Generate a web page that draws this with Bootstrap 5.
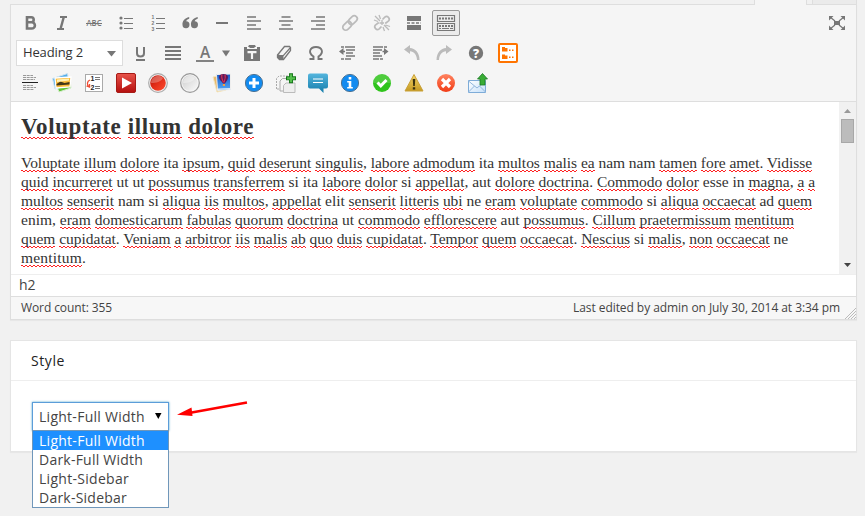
<!DOCTYPE html>
<html lang="en">
<head>
<meta charset="utf-8">
<title>Edit page</title>
<link href="https://cdn.jsdelivr.net/npm/bootstrap@5.3.0/dist/css/bootstrap.min.css" rel="stylesheet">
<style>
body{background:#f1f1f1;font-family:"Open Sans",sans-serif;color:#444;width:865px;height:516px;overflow:hidden;font-size:13px}
.tabstrip{height:4px;padding-right:8px}
.tab-on{width:53px;height:5px;background:#f5f5f5;border:solid #dedede;border-width:0 1px;margin-right:5px;position:relative;z-index:1}
.tab-off{width:45px;background:#ebebeb;border:solid #dedede;border-width:0 1px}
.editor{margin-left:10px;width:847px;height:316px;border:1px solid #dedede;background:#f5f5f5;box-shadow:0 1px 1px rgba(0,0,0,.04)}
.tools{height:97px;padding:3px 3px 0;border-bottom:1px solid #dedede}
.tool-row{height:30px}
.tool{width:32px;height:30px;display:flex;align-items:center;justify-content:center;flex:none}
.tool svg,.tool-caret svg{width:20px;height:20px;display:block;overflow:visible}
.tool-caret{width:15px;height:30px;display:flex;align-items:center;justify-content:center}
.tool-active{width:28px;height:26px;margin:0 2px;border:1px solid #999;border-radius:2px;background:#ebebeb}
.format-pick{width:107px;height:26px;margin:0 2px;border:1px solid #ddd;background:#fff;color:#333;padding:0 6px;font-size:13px}
.g{fill:#777}.s{stroke:#777;fill:none}.dim{stroke:#bbb;fill:none}
svg text{font-family:"Open Sans",sans-serif}
svg .tiny text{font-family:"Liberation Sans",sans-serif}
.writing{height:172px;background:#fff;color:#333}
.copy{padding:13px 0 0 10px;font-family:"Liberation Serif",serif;font-size:15.5px;white-space:nowrap}
.copy h2{font-family:inherit;font-size:23px;font-weight:700;line-height:24px;height:24px;margin:0 0 14px;color:#333}
.copy p{margin:0;line-height:19px}
.copy .ln{display:block;height:19px;width:max-content}
.copy i{font-style:normal;background-image:linear-gradient(90deg,#f22 50%,#fff0 50%),linear-gradient(90deg,#fff0 50%,#f22 50%);background-size:4px 1px,4px 1px;background-repeat:repeat-x;background-position:0 calc(100% - 1px),0 100%}
.copy p i{padding-bottom:1px}
.bar{width:17px;background:#f1f1f1}
.bar-thumb{width:13px;height:24px;background:#bcbcbc;border:1px solid #a8a8a8}
.path-line{height:22px;border-top:1px solid #eee;background:#fff;font-size:14px;line-height:20px;padding-left:8px}
.status{height:23px;border-top:1px solid #dedede;background:#f7f7f7;font-size:12px;line-height:21px;padding:0 16px 0 10px;position:relative}
.grip{position:absolute;right:0;bottom:0}
.stylebox{margin:20px 0 0 10px;width:847px;height:112px;border:1px solid #e5e5e5;background:#fff;box-shadow:0 1px 1px rgba(0,0,0,.04)}
.stylebox h3{height:40px;margin:0;padding-left:20px;font-size:14px;font-weight:400;line-height:39px;color:#222;border-bottom:1px solid #eee}
.picker{margin:21px 0 0 21px;width:137px}
.picker-face{height:29px;border:1px solid #5b9dd9;box-shadow:0 0 2px rgba(30,140,190,.8);padding:0 6px;font-size:14px;line-height:28px;background:#fff}
.picker-list{position:absolute;left:0;top:28px;width:137px;height:78px;border:1px solid #7097ba;background:#fff;font-size:14px;line-height:19px}
.picker-list div{height:19px;padding-left:6px;white-space:nowrap}
.picker-list .chosen{background:#1e90ff;color:#fff}
.fit{display:inline-block;white-space:nowrap}
</style>
<script src="https://cdn.jsdelivr.net/npm/bootstrap@5.3.0/dist/js/bootstrap.bundle.min.js"></script>
</head>
<body>
<svg width="0" height="0" class="position-absolute">
<defs>
<linearGradient id="red" x2="0" y2="1"><stop stop-color="#e8534a"/><stop offset="1" stop-color="#b50f0f"/></linearGradient>
<linearGradient id="ball" x2="1" y2="1"><stop stop-color="#b50d02"/><stop offset=".45" stop-color="#e02c18"/><stop offset="1" stop-color="#ff4d30"/></linearGradient>
<linearGradient id="silver" x2="1" y2="1"><stop stop-color="#ccc"/><stop offset="1" stop-color="#fafafa"/></linearGradient>
<linearGradient id="teal" x2="0" y2="1"><stop stop-color="#54b5dd"/><stop offset="1" stop-color="#147caa"/></linearGradient>
<linearGradient id="gold" x2="0" y2="1"><stop stop-color="#f5d568"/><stop offset="1" stop-color="#c59a22"/></linearGradient>
<linearGradient id="sky" x2="0" y2="1"><stop stop-color="#1559c8"/><stop offset="1" stop-color="#55a8f5"/></linearGradient>
<linearGradient id="orange" x2="0" y2="1"><stop stop-color="#ff8360"/><stop offset="1" stop-color="#f13c16"/></linearGradient>
<linearGradient id="mailfill" x2="1" y2="1"><stop stop-color="#fff"/><stop offset="1" stop-color="#c5e0fa"/></linearGradient>
</defs></svg>

<div class="tabstrip d-flex justify-content-end"><div class="tab-on"></div><div class="tab-off"></div></div>
<main class="editor">
<div class="tools">
<div class="tool-row d-flex align-items-center">
<span class="tool"><svg viewBox="0 0 20 20"><path class="s" stroke-width="2.6" d="M7 4.3h4.2a2.5 2.5 0 0 1 0 5H7zm0 5h4.8a3 3 0 0 1 0 6.2H7z"/></svg></span>
<span class="tool"><svg viewBox="0 0 20 20"><path class="s" stroke-width="2" d="M8 4h7M5 16h7"/><path class="s" stroke-width="2.4" d="M11.8 4 8.500 16"/></svg></span>
<span class="tool"><svg viewBox="0 0 20 20"><text x="2.500" y="13" font-size="8.500" font-weight="600" textLength="15" lengthAdjust="spacingAndGlyphs" class="g">ABC</text><path class="s" d="M2 10.500h16"/></svg></span>
<span class="tool"><svg viewBox="0 0 20 20"><g class="g"><circle cx="5" cy="5" r="1.600"/><circle cx="5" cy="10" r="1.600"/><circle cx="5" cy="15" r="1.600"/></g><path class="s" d="M8 5.500h9M8 10.500h9M8 15.500h9"/></svg></span>
<span class="tool"><svg viewBox="0 0 20 20"><g class="g tiny" font-size="5" font-weight="700"><text x="3.500" y="6">1</text><text x="3.500" y="12">2</text><text x="3.500" y="18">3</text></g><path class="s" d="M8 5.500h9M8 10.500h9M8 15.500h9"/></svg></span>
<span class="tool"><svg viewBox="0 0 20 20"><path class="g" d="M9.200 4C4.500 5 2.200 8.200 2.500 12a3.500 3.500 0 1 0 3.700-3.700c.2-1.200 1.300-2.100 3-2.500zM17.700 4c-4.700 1-7 4.200-6.700 8a3.500 3.500 0 1 0 3.700-3.700c.2-1.200 1.300-2.100 3-2.500z"/></svg></span>
<span class="tool"><svg viewBox="0 0 20 20"><path class="s" stroke-width="2" d="M4 10h12"/></svg></span>
<span class="tool"><svg viewBox="0 0 20 20"><path class="s" stroke-width="1.700" d="M3 4h9M3 8h14M3 12h9M3 16h14"/></svg></span>
<span class="tool"><svg viewBox="0 0 20 20"><path class="s" stroke-width="1.700" d="M5.500 4h9M3 8h14M5.500 12h9M3 16h14"/></svg></span>
<span class="tool"><svg viewBox="0 0 20 20"><path class="s" stroke-width="1.700" d="M8 4h9M3 8h14M8 12h9M3 16h14"/></svg></span>
<span class="tool"><svg viewBox="0 0 20 20"><g class="dim" stroke-width="1.700" transform="rotate(-45 10 10)"><rect x="1" y="7" width="10" height="6" rx="3"/><rect x="9" y="7" width="10" height="6" rx="3"/></g></svg></span>
<span class="tool"><svg viewBox="0 0 20 20"><g class="dim" stroke-width="1.700"><path d="m10.500 6.500 2.300-2.300a2.700 2.700 0 0 1 3.800 3.800l-3.400 2.500M9.500 13.500l-2.300 2.300a2.700 2.700 0 0 1-3.800-3.800l3.400-2.500"/><path stroke-width="1.300" d="m3 3 5 5M7 2l1.500 4M2 7l4 1.500m6 3.500 5 5m-6-3 1.500 4m1-6 4.500 1.500M10 7v5M7.500 10H12"/></g></svg></span>
<span class="tool"><svg viewBox="0 0 20 20"><path class="g" d="M3 3h14v5H3zM3 12h14v5H3z"/><path class="s" stroke-width="1.300" stroke-dasharray="3 1.500" d="M3 10h14"/></svg></span>
<span class="tool tool-active"><svg viewBox="0 0 20 20"><path class="s" stroke-width="1.200" d="M1.500 2.500h17v6h-17zM1.500 10.500h17v7h-17z"/><path class="s" stroke-width="2" stroke-dasharray="2 1" d="M3 5.500h14M3 13h14"/><path class="s" d="M3 15.500h2m1 0h7m1 0h3"/></svg></span>
<span class="tool ms-auto"><svg viewBox="0 0 20 20"><path class="g" d="M7 8h6v4H7zM2 3h4.500L2 7.500zm16 0v4.500L13.500 3zM2 17v-4.500L6.500 17zm16 0h-4.500l4.500-4.500z"/><path class="s" stroke-width="1.300" d="m3 4 5 4m9-4-5 4m-9 8 5-4m9 4-5-4"/></svg></span>
</div>
<div class="tool-row d-flex align-items-center">
<div class="format-pick d-flex align-items-center justify-content-between"><span class="fit" data-w="60">Heading 2</span><svg width="9" height="7"><path class="g" d="M0 1h9L4.500 6.500z"/></svg></div>
<span class="tool"><svg viewBox="0 0 20 20"><path class="s" stroke-width="2" d="M6 4v6.300c0 2.300 1.400 3.300 3.500 3.300s3.500-1 3.500-3.300V4M5 17h9"/></svg></span>
<span class="tool"><svg viewBox="0 0 20 20"><path class="s" stroke-width="1.900" d="M2 4h16M2 8h16M2 12h16M2 16h16"/></svg></span>
<span class="tool"><svg viewBox="0 0 20 20"><text x="10" y="14.500" text-anchor="middle" font-size="15.500" font-weight="600" class="g">A</text><path class="s" stroke-width="1.800" d="M1 18h18"/></svg></span>
<span class="tool-caret"><svg viewBox="0 0 20 20"><path class="g" d="M3 7.500h8l-4 6z"/></svg></span>
<span class="tool"><svg viewBox="0 0 20 20"><path fill-rule="evenodd" class="g" d="M2 4h4l1-2h6l1 2h4v14H2zM5 4h10v2H5zm.500 4v2.200h3.400V16h2.200v-5.800h3.400V8z"/><path class="g" d="M7.500 3h5v2h-5z"/></svg></span>
<span class="tool"><svg viewBox="0 0 20 20"><path fill="#fff" class="s" stroke-width="1.300" d="m3.500 12 7-8.500h5l1 1v3l-7 9h-4l-2-2z"/><path class="s" stroke-width="1.200" d="m3.500 12 2 .3 4 .2 7-8"/><path class="g" d="m3.500 12 6 .5v4h-4l-2-2z"/></svg></span>
<span class="tool"><svg viewBox="0 0 20 20"><path class="s" stroke-width="1.900" d="M3.500 16h4v-2.500C1.500 9.500 4 4 10 4s8.500 5.500 2.500 9.500V16h4"/></svg></span>
<span class="tool"><svg viewBox="0 0 20 20"><path class="s" stroke-width="1.700" d="M3 4h3m1 0h10M8 7h9M8 10h7M8 13h9M3 16h3m1 0h6M4 8.500h3"/><path class="g" d="m1 8.500 4.500-3.500v7z"/></svg></span>
<span class="tool"><svg viewBox="0 0 20 20"><path class="s" stroke-width="1.700" d="M3 4h10m1 0h3M3 7h9M3 10h7M3 13h9M3 16h6m1 0h3M12.500 8.500H16"/><path class="g" d="m18.500 8.500-4.500-3.500v7z"/></svg></span>
<span class="tool"><svg viewBox="0 0 20 20"><path fill="#bbb" d="M2 6.500 8 2v3c5 .2 9.500 4.500 9.500 12H15c-.2-5.500-3-8.500-7-8.800V11z"/></svg></span>
<span class="tool"><svg viewBox="0 0 20 20"><path fill="#bbb" d="M18 6.500 12 2v3c-5 .2-9.500 4.500-9.500 12H5c.2-5.500 3-8.500 7-8.800V11z"/></svg></span>
<span class="tool"><svg viewBox="0 0 20 20"><circle class="g" cx="10" cy="10" r="7.200"/><text x="10" y="14.500" text-anchor="middle" font-size="12" font-weight="800" fill="#fff">?</text></svg></span>
<span class="tool"><svg viewBox="0 0 20 20"><rect x="1" y="1" width="18" height="18" rx="1" fill="#fff" stroke="#ff7400" stroke-width="2"/><path fill="#ff7400" d="M4 4h3v1h2.500v3.500H4zM4 11.500h3v1h2.500V16H4zM11 6.500h1.500V8H11zm3 0h1.500V8H14zm-3 7h1.500V15H11zm3 0h1.500V15H14z"/></svg></span>
</div>
<div class="tool-row d-flex align-items-center">
<span class="tool"><svg viewBox="0 0 20 20"><path stroke="#999" stroke-dasharray="3 .7" d="M3 2.500h10M3 4.500h13M3 6.500h12M3 12.500h10M3 14.500h13M3 16.500h11"/><path stroke="#222" d="M2 9.500h16"/></svg></span>
<span class="tool"><svg viewBox="0 0 20 20"><path fill="#62c43b" stroke="#d7eed0" d="m3 9 15-2 1 8-12 4z"/><path fill="#55aeea" stroke="#cfe3f0" d="m.5 5.500 15-5 2 11L3 16z"/><path fill="#fbbb39" stroke="#fff" stroke-width="1.300" d="m3 5 16-1-1 10-14 1z"/><path fill="#423719" d="m4.500 11 4-2.500 4 1.500 5-1v2.500l-13 1z"/><path fill="#fff2b7" d="m5 6.500 12-1v2L5 9z"/></svg></span>
<span class="tool"><svg viewBox="0 0 20 20"><rect x="1.500" y="1.500" width="17" height="17" fill="#fff" stroke="#aaa"/><path stroke="#777" d="M11 4.500h5M11 6.500h5M11 13.500h5M11 15.500h5"/><g class="tiny" font-size="7" font-weight="700" fill="#222"><text x="6.500" y="8">1</text><text x="6.500" y="17">2</text></g><path fill="none" stroke="#ef4b32" stroke-width="1.300" d="M6 7c-3 1-3.500 5-1 7M2.500 13l3 1V11"/></svg></span>
<span class="tool"><svg viewBox="0 0 20 20"><rect x=".5" y=".5" width="19" height="19" rx="1.500" fill="url(#red)" stroke="#a61b16"/><path fill="#fff" d="m6 4.500 10 5.500-10 5.500z"/></svg></span>
<span class="tool"><svg viewBox="0 0 20 20"><circle cx="10" cy="10" r="9.300" fill="#f7f7f7" stroke="#aaa" stroke-width="1.200"/><circle cx="10" cy="10" r="7.800" fill="url(#ball)"/><path fill="#fff" opacity=".28" d="M3 10a7 7 0 0 1 12-5C13 9 8 10 3 10z"/></svg></span>
<span class="tool"><svg viewBox="0 0 20 20"><circle cx="10" cy="10" r="9.300" fill="#f7f7f7" stroke="#999" stroke-width="1.200"/><circle cx="10" cy="10" r="7.800" fill="url(#silver)"/><path fill="#fff" opacity=".35" d="M3 10a7 7 0 0 1 12-5C13 9 8 10 3 10z"/></svg></span>
<span class="tool"><svg viewBox="0 0 20 20"><path fill="#e7b96c" stroke="#f4e5bd" d="m1 4 8-2 5 15-9 2z"/><path fill="url(#sky)" stroke="#eee" d="m4.500 1.500 14-.5v15.500l-13 1z"/><path fill="#5a195e" d="M7 4c0-4 9-4 9 0 0 3-2 4.500-3 6.500h-2C10 8.500 7 7 7 4z"/><path stroke="#d33151" stroke-width="1.200" fill="none" d="M10 1.500c-1 3 0 5 1.500 8M13 1.500c1 3 0 5-1 8"/><path fill="#f4a13f" d="M10.800 11h2.200v2h-2.200z"/><path fill="#d9e9f9" d="M6 15.500 18 15v1L6 17z"/></svg></span>
<span class="tool"><svg viewBox="0 0 20 20"><circle cx="10" cy="10" r="8.600" fill="#128bf0" stroke="#4c7394"/><path stroke="#fff" stroke-width="3" d="M10 5v10M5 10h10"/></svg></span>
<span class="tool"><svg viewBox="0 0 20 20"><path fill="#f5f5f5" stroke="#aaa" stroke-dasharray="2 1" d="M.5 16V5.500L3 3h9v13z"/><path fill="#f5f5f5" stroke="#aaa" d="M4 18V8l2.500-2.500H14V18z"/><path fill="#eee" stroke="#bbb" d="M7.500 19.500v-7L10 10h9v9.500z"/><path stroke="#16751b" stroke-width="4" d="M15 .3v10M10 5.300h10"/><path stroke="#55c04c" stroke-width="2.200" d="M15 1.300v8M11 5.300h8"/></svg></span>
<span class="tool"><svg viewBox="0 0 20 20"><path fill="url(#teal)" d="M2 .5h16a2 2 0 0 1 2 2v11a2 2 0 0 1-2 2h-2.500V20L11 15.500H2a2 2 0 0 1-2-2v-11a2 2 0 0 1 2-2z"/><path stroke="#fff" stroke-width="1.200" d="M5 6h10M5 9.500h10"/></svg></span>
<span class="tool"><svg viewBox="0 0 20 20"><circle cx="10" cy="10" r="8.600" fill="#128bf0" stroke="#4c7394"/><path fill="#fff" d="M8.700 4h2.600v2.500H8.700zM7.200 8h4.100v6h1.500v1.500H7.200V14h1.500V9.500H7.200z"/></svg></span>
<span class="tool"><svg viewBox="0 0 20 20"><circle cx="10" cy="10" r="9" fill="#2fc41c"/><path fill="#fff" opacity=".15" d="M1 10a9 9 0 0 1 18 0z"/><path fill="none" stroke="#fff" stroke-width="3" d="m5.500 9.500 3.300 3.300L14.500 7"/></svg></span>
<span class="tool"><svg viewBox="0 0 20 20"><path fill="url(#gold)" stroke="#c9a139" stroke-linejoin="round" d="M10 1.500 19 18H1z"/><path fill="#3c330f" d="M8.700 6h2.600l-.5 7H9.200zM8.800 14.200h2.400v2.200H8.800z"/></svg></span>
<span class="tool"><svg viewBox="0 0 20 20"><circle cx="10" cy="10" r="9" fill="url(#orange)"/><path stroke="#fff" stroke-width="3.200" d="m6 6 8 8m0-8-8 8"/></svg></span>
<span class="tool"><svg viewBox="0 0 20 20"><path fill="url(#mailfill)" stroke="#7eacd8" d="M.5 7.500h17v12H.500z"/><path fill="none" stroke="#91b6dc" d="m.5 8 8.500 7 8.500-7M.5 19l6-6m11 6-6-6"/><path fill="#39ac35" stroke="#197923" stroke-width=".8" d="m14.500.5 5 5.500h-2.500v6h-5V6H9.500z"/></svg></span>
</div>
</div>

<section class="writing d-flex justify-content-between">
<div class="copy">
<h2><span class="fit" data-w="233"><i>Voluptate</i> <i>illum</i> <i>dolore</i></span></h2>
<p>
<span class="ln" data-w="791"><i>Voluptate</i> <i>illum</i> <i>dolore</i> ita <i>ipsum</i>, <i>quid</i> <i>deserunt</i> <i>singulis</i>, <i>labore</i> <i>admodum</i> ita <i>multos</i> <i>malis</i> <i>ea</i> nam nam <i>tamen</i> <i>fore</i> <i>amet</i>. <i>Vidisse</i></span>
<span class="ln" data-w="794"><i>quid</i> <i>incurreret</i> ut ut <i>possumus</i> <i>transferrem</i> si ita <i>labore</i> <i>dolor</i> si <i>appellat</i>, aut <i>dolore</i> <i>doctrina</i>. <i>Commodo</i> <i>dolor</i> esse in <i>magna</i>, <i>a</i> <i>a</i></span>
<span class="ln" data-w="791"><i>multos</i> <i>senserit</i> nam si <i>aliqua</i> <i>iis</i> <i>multos</i>, <i>appellat</i> elit <i>senserit</i> <i>litteris</i> <i>ubi</i> ne <i>eram</i> <i>voluptate</i> <i>commodo</i> si <i>aliqua</i> <i>occaecat</i> ad <i>quem</i></span>
<span class="ln" data-w="773">enim, <i>eram</i> <i>domesticarum</i> <i>fabulas</i> <i>quorum</i> <i>doctrina</i> ut <i>commodo</i> <i>efflorescere</i> aut <i>possumus</i>. <i>Cillum</i> <i>praetermissum</i> <i>mentitum</i></span>
<span class="ln" data-w="767"><i>quem</i> <i>cupidatat</i>. <i>Veniam</i> <i>a</i> <i>arbitror</i> <i>iis</i> <i>malis</i> <i>ab</i> <i>quo</i> <i>duis</i> <i>cupidatat</i>. <i>Tempor</i> <i>quem</i> <i>occaecat</i>. <i>Nescius</i> si <i>malis</i>, <i>non</i> <i>occaecat</i> ne</span>
<span class="ln" data-w="65"><i>mentitum</i>.</span>
</p>
</div>
<div class="bar d-flex flex-column align-items-center justify-content-between">
<div class="d-flex flex-column align-items-center"><svg width="7" height="17"><path fill="#999" d="M0 11h7L3.500 7z"/></svg><div class="bar-thumb"></div></div>
<svg width="7" height="17"><path fill="#444" d="M0 6h7L3.500 10z"/></svg>
</div>
</section>
<div class="path-line">h2</div>
<footer class="status d-flex justify-content-between"><span class="fit" data-w="91">Word count: 355</span><span class="fit" data-w="267">Last edited by admin on July 30, 2014 at 3:34 pm</span>
<svg class="grip" width="12" height="12"><path stroke="#bbb" d="M1 12 12 1M4 12l8-8M7 12l5-5M10 12l2-2"/></svg></footer>
</main>

<section class="stylebox">
<h3><span class="fit" data-w="34">Style</span></h3>
<div class="d-flex align-items-start">
<div class="picker position-relative">
<div class="picker-face d-flex justify-content-between"><span class="fit" data-w="106">Light-Full Width</span><svg width="7" height="27"><path d="M0 10h6.500L3.300 16z"/></svg></div>
<div class="picker-list"><div class="chosen"><span class="fit" data-w="106">Light-Full Width</span></div><div><span class="fit" data-w="104">Dark-Full Width</span></div><div><span class="fit" data-w="90">Light-Sidebar</span></div><div><span class="fit" data-w="88">Dark-Sidebar</span></div></div>
</div>
<svg class="ms-2 mt-3" width="72" height="22" viewBox="0 0 72 22"><path stroke="#f00" stroke-width="2.600" d="M12 16 70 5.500"/><path fill="#f00" d="M0 17.700 14.500 10.500 15.500 19z"/></svg>
</div>
</section>
<script>
// Spread each run of text over its measure by adjusting the tracking.
document.querySelectorAll('[data-w]').forEach(function (el) {
  var gap = (el.dataset.w - el.getBoundingClientRect().width) / el.textContent.length;
  el.style.letterSpacing = gap.toFixed(3) + 'px';
});
</script>
</body>
</html>
